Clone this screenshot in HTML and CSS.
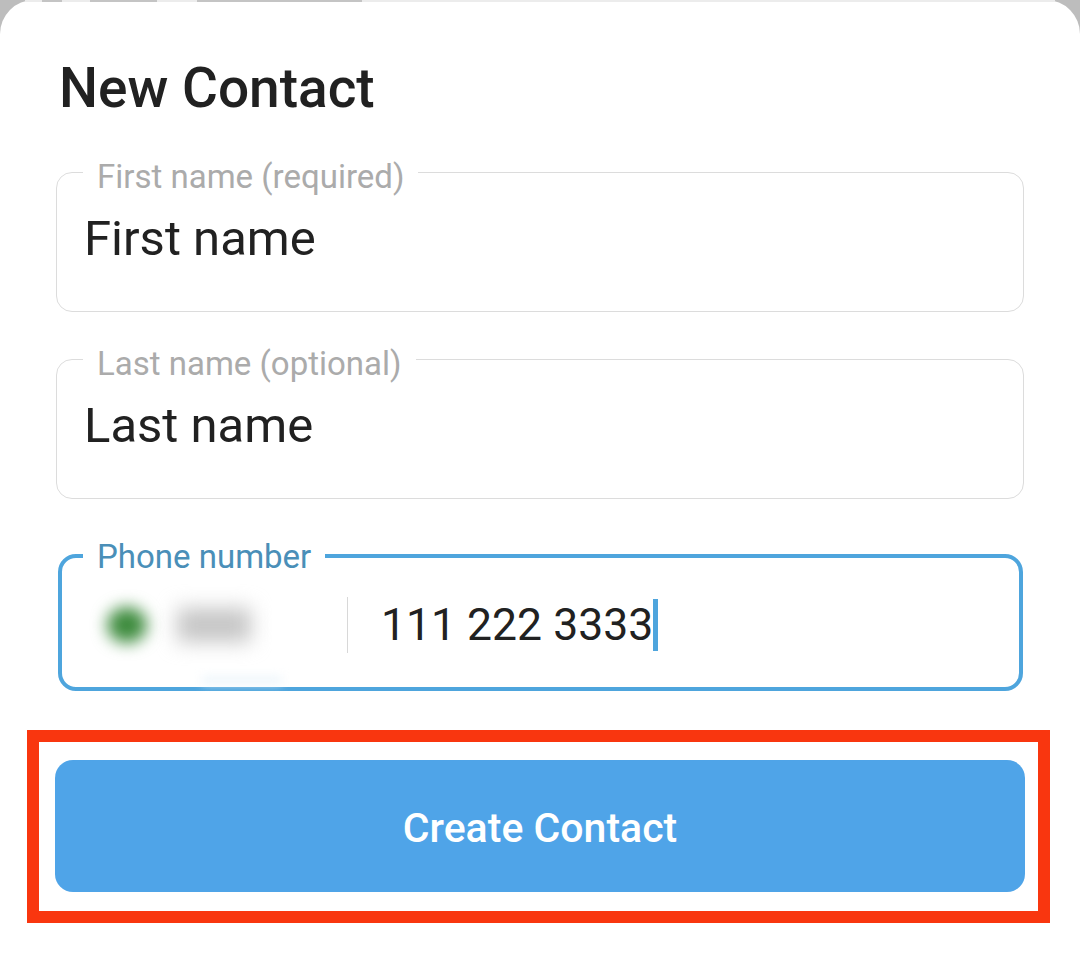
FILE: index.html
```html
<!DOCTYPE html>
<html>
<head>
    <title>New Contact</title>
    <link rel="stylesheet" href="styles.css">
</head>
<body>
    <div class="sheet">
        <div class="peek"><span class="p1"></span><span class="p2"></span><span class="p3"></span></div>
        <h1>New Contact</h1>

        <fieldset class="field first">
            <legend>First name (required)</legend>
            <div class="value">First name</div>
        </fieldset>

        <fieldset class="field second">
            <legend>Last name (optional)</legend>
            <div class="value">Last name</div>
        </fieldset>

        <fieldset class="field phone">
            <legend>Phone number</legend>
            <div class="phone-row">
                <div class="country">
                    <span class="flag"></span>
                    <span class="code"></span>
                </div>
                <div class="number">111 222 3333<span class="caret"></span></div>
            </div>
        </fieldset>

        <div class="highlight">
            <button class="create">Create Contact</button>
        </div>
    </div>
</body>
</html>
```

FILE: styles.css
```css
html, body {
    margin: 0;
    height: 957px;
    overflow: hidden;
}
body {
    background-color: #bdbdbd;
    font-family: Roboto, "Liberation Sans", sans-serif;
    color: #212121;
}
.sheet {
    position: relative;
    background-color: #fff;
    border-radius: 34px 34px 0 0;
    height: 957px;
    box-sizing: border-box;
    padding-top: 60px;
}
/* sliver of the screen behind the sheet */
.peek {
    position: absolute;
    top: 0;
    left: 25px;
    right: 25px;
    height: 2px;
    display: flex;
    background-color: #ececec;
}
.peek span {
    height: 2px;
    background-color: #c4c4c4;
}
.p1 {
    width: 20px;
    margin-left: 17px;
}
.p2 {
    width: 67px;
    margin-left: 28px;
}
.p3 {
    width: 165px;
    margin-left: 40px;
}
h1 {
    margin: 0 0 0 59px;
    font-size: 55px;
    line-height: 56px;
    font-weight: 500;
}
.field {
    margin: 0 56px;
    padding: 0 0 0 27px;
    border: 1.5px solid #dcdcdc;
    border-radius: 16px;
    box-sizing: border-box;
    min-width: 0;
}
.field legend {
    margin-left: -1px;
    padding: 10px 14px 0 14px;
    font-size: 33px;
    line-height: 36px;
    color: #ababab;
}
.first {
    margin-top: 33px;
    height: 163px;
}
.second {
    margin-top: 24px;
    height: 163px;
}
.value {
    margin-top: 17px;
    font-size: 49px;
    line-height: 54px;
    color: #212121;
}
.phone {
    position: relative;
    margin: 37.5px 57.5px 0 58px;
    padding-left: 28px;
    height: 154.5px;
    border: 4px solid #4ea5dd;
    border-radius: 18px;
}
.phone legend {
    margin-left: -7px;
    padding-top: 2px;
    color: #4a8fb8;
}
/* faint smudge left under the blurred country code */
.phone::after {
    content: "";
    position: absolute;
    left: 140px;
    bottom: 3px;
    width: 80px;
    height: 8px;
    background-color: #eef6fb;
    filter: blur(5px);
}
.phone-row {
    display: flex;
    align-items: center;
    height: 70px;
    margin-top: 15.5px;
}
.country {
    display: flex;
    align-items: center;
    width: 258px;
    height: 56px;
    border-right: 1px solid #d8d8d8;
    box-sizing: border-box;
}
.flag {
    width: 40px;
    height: 36px;
    margin-left: 17px;
    border-radius: 50%;
    background-color: #3d8b3d;
    filter: blur(8px);
}
.code {
    width: 74px;
    height: 34px;
    margin-left: 30px;
    background-color: #c6c6c6;
    filter: blur(10px);
}
.number {
    display: flex;
    align-items: center;
    margin-left: 33px;
    font-size: 44.5px;
    line-height: 54px;
    color: #212121;
}
.caret {
    width: 5px;
    height: 52px;
    background-color: #4ea5dd;
}
.highlight {
    margin: 39px 30px 0 27px;
    padding: 18px 13px 19px 16px;
    border: 12px solid #f9360f;
}
.create {
    display: block;
    width: 100%;
    height: 132px;
    padding-top: 4px;
    border: none;
    border-radius: 18px;
    background-color: #4fa4e8;
    color: #fff;
    font-family: Roboto, "Liberation Sans", sans-serif;
    font-size: 41px;
    font-weight: 500;
}
```
